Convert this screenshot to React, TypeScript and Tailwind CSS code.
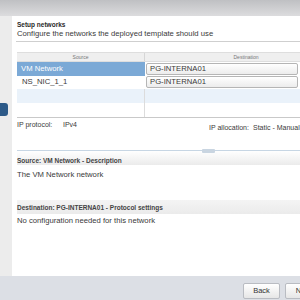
export default function App() {
  return (
    <div className="w-[300px] h-[300px] flex flex-col overflow-hidden bg-white font-['Liberation_Sans',Arial,sans-serif] text-[7.7px] text-[#3a3a3a]">
      <div className="h-[16px] shrink-0 bg-gradient-to-b from-[#bfc0c3] to-[#dcdcde]" />

      <div className="flex flex-1 min-h-0">
        <div className="w-[12px] shrink-0 bg-[#ececec] pt-[87px]">
          <div className="w-[8px] h-[13px] rounded-r-[3px] bg-[#2d5a88]" />
        </div>

        <div className="flex-1 min-w-0 flex flex-col pl-[5px]">
          <div className="h-[25px] pt-[4px] leading-[9px]">
            <p className="font-bold text-[6.5px] text-[#2a2a2a]">Setup networks</p>
            <p>Configure the networks the deployed template should use</p>
          </div>
          <div className="-ml-[1px] h-px shrink-0 bg-[#cfcfcf]" />

          {/* table */}
          <div className="mt-[10px] w-[330px] shrink-0 border-b border-[#c9c9c9]">
            <div className="flex h-[10px] bg-[#efefef] border-y border-[#dedede] text-[5px] text-[#777] leading-[8px]">
              <div className="w-[128px] text-center border-r border-[#d6d6d6]">Source</div>
              <div className="flex-1 text-center">Destination</div>
            </div>
            <div className="flex h-[14px]">
              <div className="w-[128px] bg-[#7ba9d6] text-white pl-[4px] pt-[1px] leading-[11px]">VM Network</div>
              <div className="flex-1 pl-px pt-px pr-[49px]">
                <div className="h-[12px] rounded-[2px] border border-[#b5b5b5] bg-gradient-to-b from-white to-[#ececec] pl-[3px] leading-[10px]">PG-INTERNA01</div>
              </div>
            </div>
            <div className="flex h-[13px]">
              <div className="w-[128px] pl-[5px] leading-[12px]">NS_NIC_1_1</div>
              <div className="flex-1 pl-px pr-[49px]">
                <div className="h-[12px] rounded-[2px] border border-[#b5b5b5] bg-gradient-to-b from-white to-[#ececec] pl-[3px] leading-[10px]">PG-INTERNA01</div>
              </div>
            </div>
            <div className="flex h-[14px] bg-[#eaf2fa]">
              <div className="w-[128px] border-r border-[#dcdcdc]" />
            </div>
            <div className="flex h-[14px]">
              <div className="w-[128px] border-r border-[#dcdcdc]" />
            </div>
          </div>

          <div className="flex h-[14px] shrink-0 leading-[10px] whitespace-nowrap text-[7px]">
            <span className="w-[46px] shrink-0 pt-[2px]">IP protocol:</span>
            <span className="w-[146px] shrink-0 pt-[2px]">IPv4</span>
            <span className="w-[44px] shrink-0 pt-[5px]">IP allocation:</span>
            <span className="shrink-0 pt-[5px]">Static - Manual</span>
          </div>

          {/* splitter */}
          <div className="mt-[18px] relative h-px shrink-0 bg-[#c7d6e4]">
            <div className="absolute left-[185px] -top-[1px] w-[13px] h-[4px] rounded-[1px] bg-[#c9d5e1]" />
          </div>

          <div className="h-[14px] shrink-0 bg-gradient-to-b from-white to-[#ebebeb] pt-[5px] leading-[10px] font-bold text-[6.5px] text-[#444]">
            Source: VM Network - Description
          </div>
          <p className="mt-[5px] leading-[10px]">The VM Network network</p>

          <div className="mt-[20px] h-[14px] shrink-0 bg-gradient-to-b from-[#f4f4f4] to-[#ebebeb] pt-[3px] leading-[10px] font-bold text-[6.5px] text-[#444] whitespace-nowrap">
            Destination: PG-INTERNA01 - Protocol settings
          </div>
          <p className="mt-[2px] leading-[10px]">No configuration needed for this network</p>
        </div>
      </div>

      <div className="h-[24px] shrink-0 bg-[#dcdfe5] flex items-start justify-end gap-[5px] pt-[7px] -mr-[22px]">
        <button className="w-[37px] h-[16px] rounded-[2px] border border-[#b9bcc2] bg-gradient-to-b from-white to-[#e6e6e6] text-[7.5px] text-[#333]">Back</button>
        <button className="w-[37px] h-[16px] rounded-[2px] border border-[#b9bcc2] bg-gradient-to-b from-white to-[#e6e6e6] text-[7.5px] text-[#333]">Next</button>
      </div>
    </div>
  )
}
